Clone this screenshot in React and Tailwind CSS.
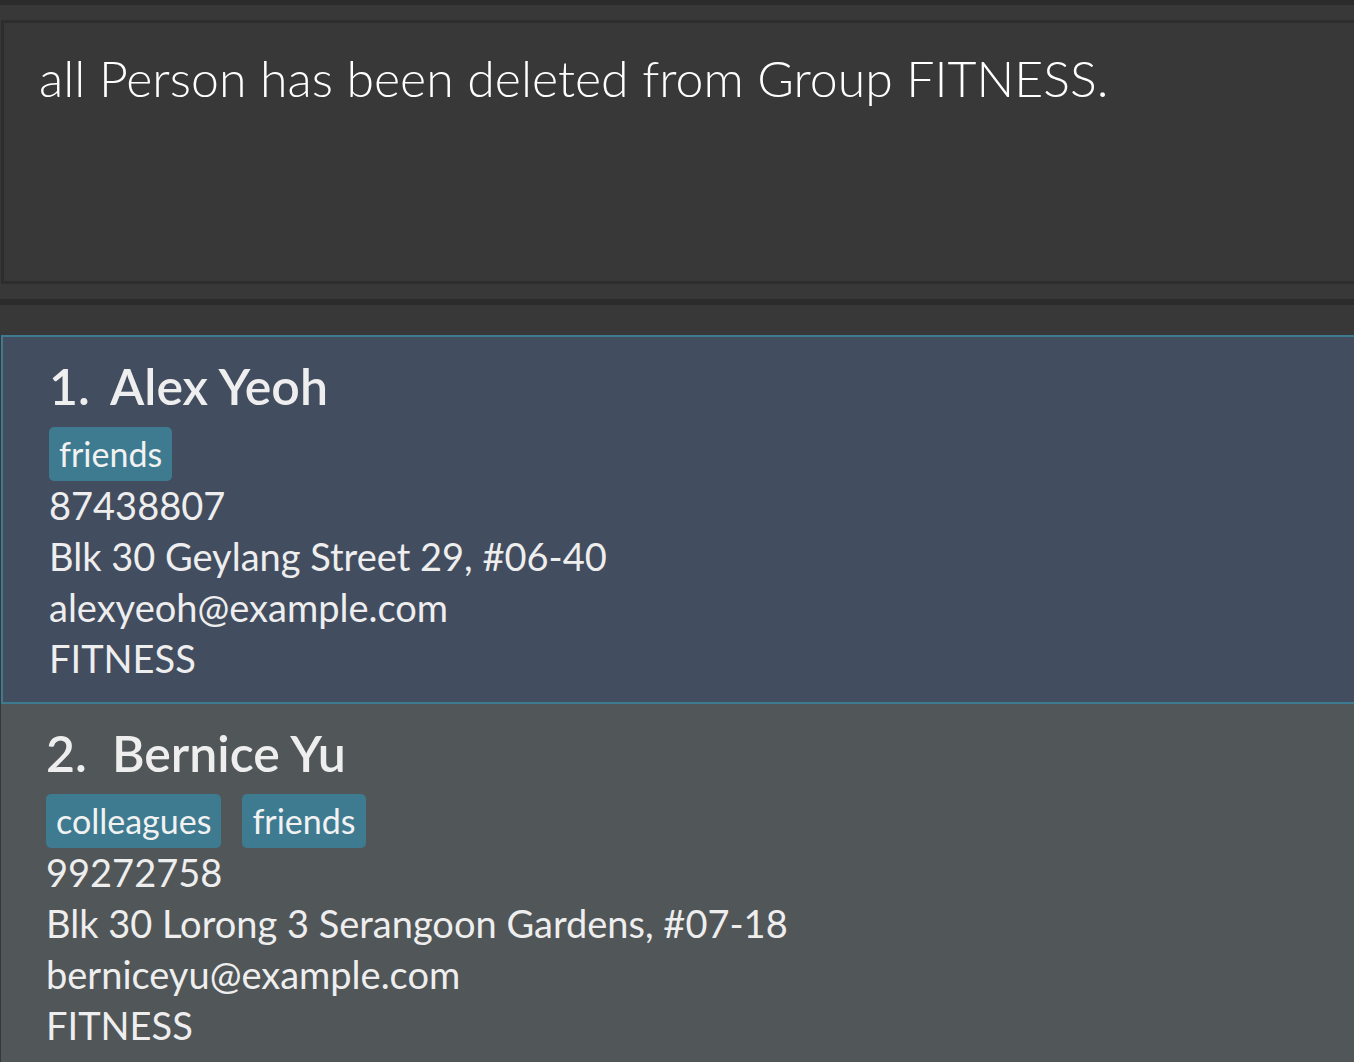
import React from 'react';

const persons = [
  {
    name: 'Alex Yeoh',
    tags: ['friends'],
    phone: '87438807',
    address: 'Blk 30 Geylang Street 29, #06-40',
    email: 'alexyeoh@example.com',
    group: 'FITNESS',
  },
  {
    name: 'Bernice Yu',
    tags: ['colleagues', 'friends'],
    phone: '99272758',
    address: 'Blk 30 Lorong 3 Serangoon Gardens, #07-18',
    email: 'berniceyu@example.com',
    group: 'FITNESS',
  },
];

const PersonCard = ({ person, index, selected }) => (
  <div
    className={
      selected
        ? 'ml-[1px] border-2 border-r-0 border-[#3e7b91] bg-[#424d5f] pl-[46px] pt-[21px] pb-[18px]'
        : 'ml-[1px] bg-[#515659] pl-[45px] pt-[21px] pb-[18px]'
    }
  >
    <div className="flex text-[50px] leading-[57px] font-semibold text-[#eeeeee]">
      <span className={selected ? 'w-[61px]' : 'w-[66px]'}>{index}.</span>
      <span>{person.name}</span>
    </div>
    <div className="mt-[12px] mb-[-1px] flex gap-[21px]">
      {person.tags.map((tag) => (
        <span
          key={tag}
          className="h-[54px] rounded-[5px] bg-[#3e7b91] px-[10px] text-[34px] leading-[54px] text-[#f2f2f2]"
        >
          {tag}
        </span>
      ))}
    </div>
    <div className="text-[38px] leading-[51px] text-[#eeeeee]">
      <div>{person.phone}</div>
      <div>{person.address}</div>
      <div>{person.email}</div>
      <div>{person.group}</div>
    </div>
  </div>
);

export default function App() {
  return (
    <div
      className="h-[1062px] w-[1354px] overflow-hidden bg-[#383838]"
      style={{ fontFamily: 'Lato, "Open Sans", sans-serif' }}
    >
      <div className="h-[5px] bg-[#2b2b2b]" />
      <div className="pt-[15px]">
        {/* result display */}
        <div className="ml-[1px] h-[264px] border-[3px] border-r-0 border-[#2d2d2d] bg-[#383838] pl-[35px] pt-[25px]">
          <p className="text-[50px] leading-[60px] font-light text-white">
            all Person has been deleted from Group FITNESS.
          </p>
        </div>
      </div>
      <div className="mt-[15px] h-[6px] bg-[#2b2b2b]" />
      <div className="pt-[30px]">
        {persons.map((p, i) => (
          <PersonCard key={p.name} person={p} index={i + 1} selected={i === 0} />
        ))}
      </div>
    </div>
  );
}
